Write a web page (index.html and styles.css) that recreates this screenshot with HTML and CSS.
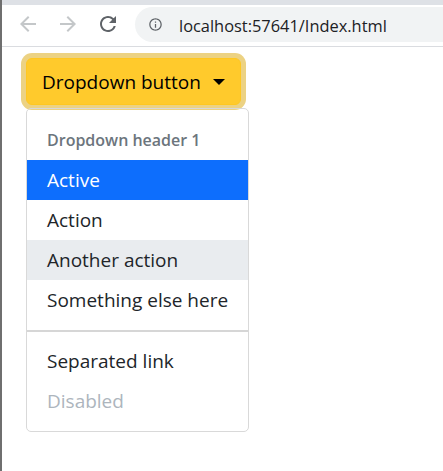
FILE: index.html
```html
<!DOCTYPE html>
<html>
<head>
    <title>Dropdown</title>
    <link rel="stylesheet" href="styles.css">
</head>
<body>
    <div class="window">
        <div class="tabstrip"></div>
        <div class="toolbar">
            <span class="nav-icon disabled">
                <svg viewBox="0 0 24 24" width="24" height="24"><path d="M20 11H7.83l5.59-5.59L12 4l-8 8 8 8 1.41-1.41L7.83 13H20v-2z"/></svg>
            </span>
            <span class="nav-icon disabled">
                <svg viewBox="0 0 24 24" width="24" height="24"><path d="M4 11h12.17l-5.59-5.59L12 4l8 8-8 8-1.41-1.41L16.17 13H4v-2z"/></svg>
            </span>
            <span class="nav-icon">
                <svg viewBox="0 0 24 24" width="24" height="24"><path d="M17.65 6.35A7.958 7.958 0 0 0 12 4c-4.42 0-7.990 3.58-7.99 8s3.57 8 7.99 8c3.73 0 6.84-2.55 7.73-6h-2.08A5.99 5.99 0 0 1 12 18c-3.31 0-6-2.69-6-6s2.69-6 6-6c1.66 0 3.14.69 4.22 1.78L13 11h7V4l-2.35 2.35z"/></svg>
            </span>
            <div class="omnibox">
                <svg class="info-icon" viewBox="0 0 24 24" width="15" height="15"><path d="M11 7h2v2h-2zm0 4h2v6h-2zm1-9C6.48 2 2 6.480 2 12s4.48 10 10 10 10-4.48 10-10S17.52 2 12 2zm0 18c-4.41 0-8-3.59-8-8s3.59-8 8-8 8 3.59 8 8-3.59 8-8 8z"/></svg>
                <span class="url">localhost:57641/Index.html</span>
            </div>
        </div>

        <div class="page">
            <div class="dropdown">
                <button class="btn-warning dropdown-toggle">Dropdown button</button>
                <ul class="dropdown-menu">
                    <li><h6 class="dropdown-header">Dropdown header 1</h6></li>
                    <li><a class="dropdown-item active" href="#">Active</a></li>
                    <li><a class="dropdown-item" href="#">Action</a></li>
                    <li><a class="dropdown-item hover" href="#">Another action</a></li>
                    <li><a class="dropdown-item" href="#">Something else here</a></li>
                    <li><hr class="dropdown-divider"></li>
                    <li><a class="dropdown-item" href="#">Separated link</a></li>
                    <li><a class="dropdown-item disabled" href="#">Disabled</a></li>
                </ul>
            </div>
        </div>
    </div>
</body>
</html>
```

FILE: styles.css
```css
html, body {
    margin: 0;
    height: 100%;
    background: #fff;
}
.window {
    height: 100%;
    border-left: 2px solid #6f6f6f;
    box-sizing: border-box;
    font-family: "Open Sans", "Noto Sans", sans-serif;
}
.tabstrip {
    height: 5px;
    background-color: #dee1e6;
}
.toolbar {
    display: flex;
    align-items: center;
    height: 42px;
    padding: 0 0 3px 14px;
    box-sizing: border-box;
    border-bottom: 1px solid #dadce0;
}
.nav-icon {
    display: flex;
    width: 24px;
    height: 24px;
    margin-right: 16px;
    fill: #5f6368;
}
.nav-icon.disabled {
    fill: #c4c7c9;
}
.nav-icon:nth-child(3) {
    margin-right: 15px;
}
.omnibox {
    flex: 1;
    display: flex;
    align-items: center;
    height: 35px;
    padding-left: 13px;
    border-radius: 18px 0 0 18px;
    background-color: #f1f3f4;
}
.info-icon {
    fill: #5f6368;
    margin-right: 16px;
}
.url {
    font-size: 16.4px;
    color: #202124;
    position: relative;
    top: 1px;
}
.page {
    padding: 11px 24px;
}
.btn-warning {
    display: flex;
    align-items: center;
    height: 47px;
    padding: 0 15px;
    font-family: inherit;
    font-size: 19px;
    color: #000;
    background-color: #ffca2c;
    border: 1px solid #ffc720;
    border-radius: 6px;
    box-shadow: 0 0 0 5px #ecd283;
}
.dropdown-toggle:after {
    content: "";
    margin-left: 12px;
    border-top: 6px solid #000;
    border-left: 6px solid transparent;
    border-right: 6px solid transparent;
}
.dropdown-menu {
    width: 223px;
    box-sizing: border-box;
    margin: 3px 0 0;
    padding: 10px 0;
    list-style: none;
    border: 1px solid #d9d9d9;
    border-radius: 5px;
}
.dropdown-header {
    margin: 0;
    padding: 8px 20px 7px;
    font-size: 16px;
    font-weight: 600;
    line-height: 26px;
    color: #6c757d;
}
.dropdown-item {
    display: block;
    padding: 0 20px;
    font-size: 19px;
    line-height: 40px;
    color: #212529;
    text-decoration: none;
    white-space: nowrap;
}
.dropdown-item.active {
    color: #fff;
    background-color: #0d6efd;
}
.dropdown-item.hover {
    background-color: #e9ecef;
}
.dropdown-item.disabled {
    color: #adb5bd;
}
.dropdown-divider {
    height: 0;
    margin: 10px 0 9px;
    border: 0;
    border-top: 2px solid #d6d6d6;
}
```
